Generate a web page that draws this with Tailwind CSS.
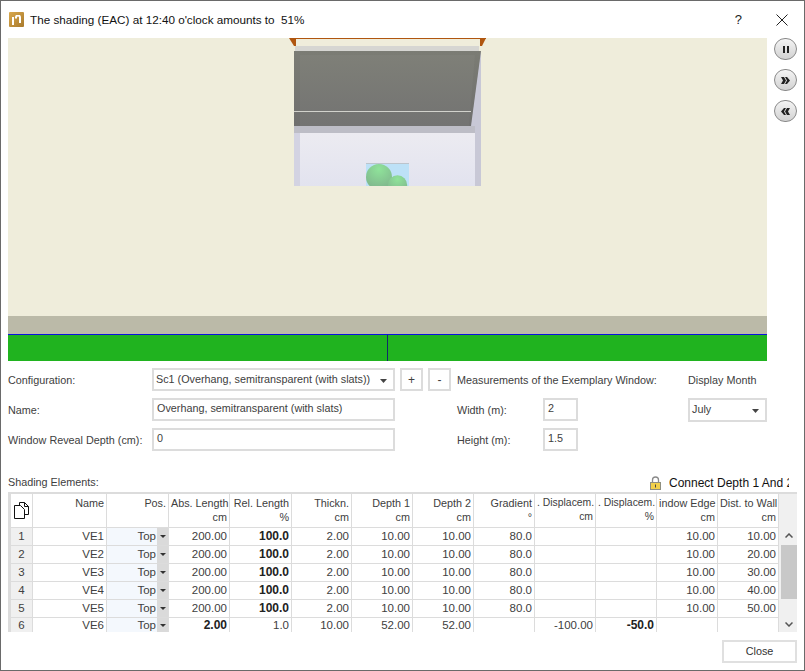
<!DOCTYPE html>
<html lang="en">
<head>
<meta charset="UTF-8">
<title>Shading</title>
<script src="https://cdn.jsdelivr.net/npm/@tailwindcss/browser@4"></script>
</head>
<body class="bg-white font-['Liberation_Sans',sans-serif] text-[10.8px] text-[#404040]">
<div class="w-[805px] h-[671px] border border-[#6a6a6a] flex flex-col overflow-hidden">

  <!-- title bar -->
  <div class="h-[37px] shrink-0 flex items-center pl-[8px]">
    <div class="w-[15px] h-[15px] rounded-[1px] bg-gradient-to-br from-[#d9a94e] to-[#a97a2c] flex items-center justify-center">
      <svg width="9" height="10" viewBox="0 0 9 10"><path d="M1 10V2M4 3.500V2.500a2 2 0 0 1 4 0V8" stroke="#fff" stroke-width="2" fill="none"/></svg>
    </div>
    <span class="ml-[6px] text-[11.7px] text-[#111]">The shading (EAC) at 12:40 o'clock amounts to&nbsp; 51%</span>
    <span class="ml-auto text-[13px] text-[#222]">?</span>
    <svg class="ml-[34px] mr-[16px]" width="12" height="12" viewBox="0 0 12 12"><path d="M.5.5l11 11M11.5.5l-11 11" stroke="#222" fill="none"/></svg>
  </div>

  <div class="flex pl-[7px] shrink-0">
    <!-- 3d view -->
    <div class="w-[759px]">
      <svg class="block" width="759" height="278" viewBox="8 38 759 278">
        <defs>
          <clipPath id="win"><rect x="366" y="163" width="43" height="23"/></clipPath>
          <radialGradient id="tree" cx="0.5" cy="0.2" r="0.8"><stop offset="0" stop-color="#8fe39a"/><stop offset="1" stop-color="#7fb48c"/></radialGradient>
          <linearGradient id="back" x1="0" y1="0" x2="0" y2="1"><stop offset="0" stop-color="#ecebf1"/><stop offset="1" stop-color="#e2e3ef"/></linearGradient>
          <linearGradient id="slat" x1="0" y1="0" x2="0" y2="1"><stop offset="0" stop-color="#7b7c74"/><stop offset="1" stop-color="#6f6f6e"/></linearGradient>
        </defs>
        <rect x="8" y="38" width="759" height="278" fill="#efeddb"/>
        <rect x="294" y="51" width="6" height="135" fill="#d3d3e2"/>
        <rect x="469" y="51" width="12" height="135" fill="#c8c8d6"/>
        <rect x="295" y="46" width="184" height="5" fill="#d6d6d2"/>
        <rect x="294" y="126" width="181" height="7" fill="#bdbdc6"/>
        <rect x="300" y="133" width="175" height="53" fill="url(#back)"/>
        <path d="M294 51H481L471 126H294Z" fill="url(#slat)"/>
        <path d="M300 55H475L469 126H300Z" fill="#fff" fill-opacity="0.03"/>
        <path d="M294 111.500H471" stroke="#d2d2cc" fill="none"/>
        <rect x="366" y="163" width="43" height="23" fill="#bde1f7"/>
        <rect x="366" y="163" width="43" height="1" fill="#bcc4cc"/>
        <g clip-path="url(#win)">
          <circle cx="379" cy="177" r="13" fill="url(#tree)"/>
          <circle cx="397.500" cy="185" r="9.700" fill="url(#tree)"/>
        </g>
        <rect x="290" y="38" width="196" height="1" fill="#b0560f"/>
        <path d="M289 38h7v8h-2zM486 38h-6v8h2z" fill="#b0560f"/>
      </svg>
      <div class="h-[18px] bg-[#bbbaa8]"></div>
      <div class="h-[27px] bg-[#20b31f] border-t border-[#0a10e0] pl-[379px]">
        <div class="w-px h-full bg-[#102a6a]"></div>
      </div>
    </div>
    <!-- playback -->
    <div class="flex flex-col gap-[9px] pl-[7px]">
      <button class="w-[23px] h-[22px] rounded-full border border-[#8a8a8a] bg-gradient-to-b from-[#f4f4f4] to-[#d2d2d2] flex items-center justify-center">
        <svg width="6" height="7" viewBox="0 0 6 7"><path d="M0 0h2v7H0zM4 0h2v7H4z" fill="#222"/></svg>
      </button>
      <button class="w-[23px] h-[22px] rounded-full border border-[#8a8a8a] bg-gradient-to-b from-[#f4f4f4] to-[#d2d2d2] flex items-center justify-center">
        <svg width="9" height="7" viewBox="0 0 9 7"><path d="M0 0l3 0 2 3.500-2 3.500H0l2-3.500zM4 0l2 0 3 3.500-3 3.500H4l2-3.500z" fill="#222"/></svg>
      </button>
      <button class="w-[23px] h-[22px] rounded-full border border-[#8a8a8a] bg-gradient-to-b from-[#f4f4f4] to-[#d2d2d2] flex items-center justify-center">
        <svg width="9" height="7" viewBox="0 0 9 7"><path d="M9 0L6 0 4 3.500 6 7h3L7 3.500zM5 0L3 0 0 3.500 3 7h2L3 3.500z" fill="#222"/></svg>
      </button>
    </div>
  </div>

  <!-- form -->
  <div class="mt-[7px] pl-[7px] grid grid-cols-[144px_243px_5px_23px_5px_23px_6px_86px_35px_110px_79px] grid-rows-[23px_23px_23px] gap-y-[7px] items-center">
    <div class="pt-[2px]">Configuration:</div>
    <div class="h-[23px] border-2 border-[#dcdcdc] flex items-center pl-[2px] whitespace-nowrap overflow-hidden">Sc1 (Overhang, semitransparent (with slats))<svg class="ml-auto mr-[6px] mt-[2px]" width="7" height="4" viewBox="0 0 7 4"><path d="M0 0h7L3.500 4z" fill="#444"/></svg></div>
    <div></div>
    <button class="h-[23px] border-2 border-[#dcdcdc] text-[12px]">+</button>
    <div></div>
    <button class="h-[23px] border-2 border-[#dcdcdc] text-[12px]">-</button>
    <div></div>
    <div class="col-span-2 whitespace-nowrap pt-[2px]">Measurements of the Exemplary Window:</div>
    <div></div>
    <div class="whitespace-nowrap pt-[1px]">Display Month</div>

    <div class="pt-[2px]">Name:</div>
    <div class="h-[23px] border-2 border-[#dcdcdc] pl-[3px] pt-[1px] leading-[15px]">Overhang, semitransparent (with slats)</div>
    <div class="col-span-5"></div>
    <div class="pt-[2px]">Width (m):</div>
    <div class="h-[23px] border-2 border-[#dcdcdc] pl-[3px] pt-[1px] leading-[15px]">2</div>
    <div></div>
    <div class="h-[24px] border-2 border-[#dcdcdc] flex items-center pl-[2px]">July<svg class="ml-auto mr-[6px] mt-[2px]" width="7" height="4" viewBox="0 0 7 4"><path d="M0 0h7L3.500 4z" fill="#444"/></svg></div>

    <div class="whitespace-nowrap pt-[2px]">Window Reveal Depth (cm):</div>
    <div class="h-[23px] border-2 border-[#dcdcdc] pl-[3px] pt-[1px] leading-[15px]">0</div>
    <div class="col-span-5"></div>
    <div class="pt-[2px]">Height (m):</div>
    <div class="h-[23px] border-2 border-[#dcdcdc] pl-[3px] pt-[1px] leading-[15px]">1.5</div>
  </div>

  <!-- table heading -->
  <div class="mt-[22px] h-[19px] pl-[7px] flex items-center">
    <span>Shading Elements:</span>
    <svg class="ml-auto" width="11" height="14" viewBox="0 0 11 14"><path d="M2.500 7V4a3 3 0 0 1 6 0v3" stroke="#8a8a8a" stroke-width="1.300" fill="none"/><rect x="0.500" y="6.500" width="10" height="7" fill="#f2d04a" stroke="#8f8f80"/><rect x="5" y="8.500" width="1" height="3" fill="#444"/></svg>
    <span class="ml-[8px] mr-[15px] w-[120px] overflow-hidden whitespace-nowrap text-[12px] text-[#111]">Connect Depth 1 And 2</span>
  </div>

  <!-- table -->
  <div class="ml-[7px] w-[789px] h-[140px] flex border-t-2 border-l-2 border-[#dcdcdc] overflow-hidden">
    <table class="table-fixed border-collapse w-[767px] h-fit text-[11.5px] leading-[15px] [&_th]:font-normal [&_th]:text-[10.8px] [&_th]:text-right [&_th]:align-top [&_th]:px-[2px] [&_th]:pt-[2px] [&_th]:h-[33px] [&_th]:leading-[14px] [&_th]:whitespace-nowrap [&_th]:overflow-hidden [&_th]:border [&_th]:border-[#dcdcdc] [&_th]:border-t-0 [&_td]:h-[18px] [&_td]:p-0 [&_td]:pr-[2px] [&_td]:text-right [&_td]:border [&_td]:border-[#dcdcdc] [&_td]:whitespace-nowrap [&_td]:overflow-hidden [&_tr:last-child_td]:h-[16px]">
      <colgroup>
        <col class="w-[22px]"><col class="w-[74px]"><col class="w-[62px]"><col class="w-[61px]"><col class="w-[62px]"><col class="w-[60px]"><col class="w-[61px]"><col class="w-[61px]"><col class="w-[61px]"><col class="w-[61px]"><col class="w-[61px]"><col class="w-[61px]"><col class="w-[61px]">
      </colgroup>
      <thead>
        <tr>
          <th class="border-l-0"><svg class="mx-auto mt-[6px]" width="15" height="17" viewBox="0 0 15 17"><path d="M5.500 3.500V.5h5l4 4v8h-4M.5 3.500h6l4 4v9h-10zM10.500.5v4h4" stroke="#111" fill="#fff"/></svg></th>
          <th>Name</th><th>Pos.</th><th>Abs. Length<br>cm</th><th>Rel. Length<br>%</th><th>Thickn.<br>cm</th><th>Depth 1<br>cm</th><th>Depth 2<br>cm</th><th>Gradient<br>°</th>
          <th class="!text-[10.4px]">. Displacem.<br>cm</th><th class="!text-[10.4px]">. Displacem.<br>%</th><th>indow Edge<br>cm</th><th>Dist. to Wall<br>cm</th>
        </tr>
      </thead>
      <tbody>
        <tr><td class="!text-center !pr-0 bg-[#f0f0f0] border-l-0">1</td><td>VE1</td><td class="bg-[#f4f8fd] !pr-0"><div class="flex justify-end items-center h-full">Top<span class="ml-[1px] w-[11px] h-[17px] bg-[#dadada] flex items-center justify-center"><svg width="6" height="3" viewBox="0 0 6 3"><path d="M0 0h6L3 3z" fill="#333"/></svg></span></div></td><td>200.00</td><td class="font-bold text-[12px] text-[#222]">100.0</td><td>2.00</td><td>10.00</td><td>10.00</td><td>80.0</td><td></td><td></td><td>10.00</td><td>10.00</td></tr>
        <tr><td class="!text-center !pr-0 bg-[#f0f0f0] border-l-0">2</td><td>VE2</td><td class="bg-[#f4f8fd] !pr-0"><div class="flex justify-end items-center h-full">Top<span class="ml-[1px] w-[11px] h-[17px] bg-[#dadada] flex items-center justify-center"><svg width="6" height="3" viewBox="0 0 6 3"><path d="M0 0h6L3 3z" fill="#333"/></svg></span></div></td><td>200.00</td><td class="font-bold text-[12px] text-[#222]">100.0</td><td>2.00</td><td>10.00</td><td>10.00</td><td>80.0</td><td></td><td></td><td>10.00</td><td>20.00</td></tr>
        <tr><td class="!text-center !pr-0 bg-[#f0f0f0] border-l-0">3</td><td>VE3</td><td class="bg-[#f4f8fd] !pr-0"><div class="flex justify-end items-center h-full">Top<span class="ml-[1px] w-[11px] h-[17px] bg-[#dadada] flex items-center justify-center"><svg width="6" height="3" viewBox="0 0 6 3"><path d="M0 0h6L3 3z" fill="#333"/></svg></span></div></td><td>200.00</td><td class="font-bold text-[12px] text-[#222]">100.0</td><td>2.00</td><td>10.00</td><td>10.00</td><td>80.0</td><td></td><td></td><td>10.00</td><td>30.00</td></tr>
        <tr><td class="!text-center !pr-0 bg-[#f0f0f0] border-l-0">4</td><td>VE4</td><td class="bg-[#f4f8fd] !pr-0"><div class="flex justify-end items-center h-full">Top<span class="ml-[1px] w-[11px] h-[17px] bg-[#dadada] flex items-center justify-center"><svg width="6" height="3" viewBox="0 0 6 3"><path d="M0 0h6L3 3z" fill="#333"/></svg></span></div></td><td>200.00</td><td class="font-bold text-[12px] text-[#222]">100.0</td><td>2.00</td><td>10.00</td><td>10.00</td><td>80.0</td><td></td><td></td><td>10.00</td><td>40.00</td></tr>
        <tr><td class="!text-center !pr-0 bg-[#f0f0f0] border-l-0">5</td><td>VE5</td><td class="bg-[#f4f8fd] !pr-0"><div class="flex justify-end items-center h-full">Top<span class="ml-[1px] w-[11px] h-[17px] bg-[#dadada] flex items-center justify-center"><svg width="6" height="3" viewBox="0 0 6 3"><path d="M0 0h6L3 3z" fill="#333"/></svg></span></div></td><td>200.00</td><td class="font-bold text-[12px] text-[#222]">100.0</td><td>2.00</td><td>10.00</td><td>10.00</td><td>80.0</td><td></td><td></td><td>10.00</td><td>50.00</td></tr>
        <tr><td class="!text-center !pr-0 bg-[#f0f0f0] border-l-0">6</td><td>VE6</td><td class="bg-[#f4f8fd] !pr-0"><div class="flex justify-end items-center h-full">Top<span class="ml-[1px] w-[11px] h-[15px] bg-[#dadada] flex items-center justify-center"><svg width="6" height="3" viewBox="0 0 6 3"><path d="M0 0h6L3 3z" fill="#333"/></svg></span></div></td><td class="font-bold text-[12px] text-[#222]">2.00</td><td>1.0</td><td>10.00</td><td>52.00</td><td>52.00</td><td></td><td>-100.00</td><td class="font-bold text-[12px] text-[#222]">-50.0</td><td></td><td></td></tr>
      </tbody>
    </table>
    <!-- scrollbar -->
    <div class="w-[20px] shrink-0 bg-[#f0f0f0] flex flex-col">
      <div class="h-[33px]"></div>
      <div class="h-[18px] flex items-center justify-center"><svg width="8" height="5" viewBox="0 0 8 5"><path d="M.5 4.500L4 1l3.500 3.500" stroke="#555" stroke-width="1.500" fill="none"/></svg></div>
      <div class="h-[55px] mx-[2px] bg-[#c8c8c8]"></div>
      <div class="h-[16px] mt-[17px] flex items-center justify-center"><svg width="8" height="5" viewBox="0 0 8 5"><path d="M.5.5L4 4 7.500.5" stroke="#555" stroke-width="1.500" fill="none"/></svg></div>
    </div>
  </div>

  <div class="flex justify-end pr-[7px] mt-[8px]">
    <button class="w-[75px] h-[23px] border-2 border-[#e0e0e0] text-[#333]">Close</button>
  </div>
</div>
</body>
</html>
